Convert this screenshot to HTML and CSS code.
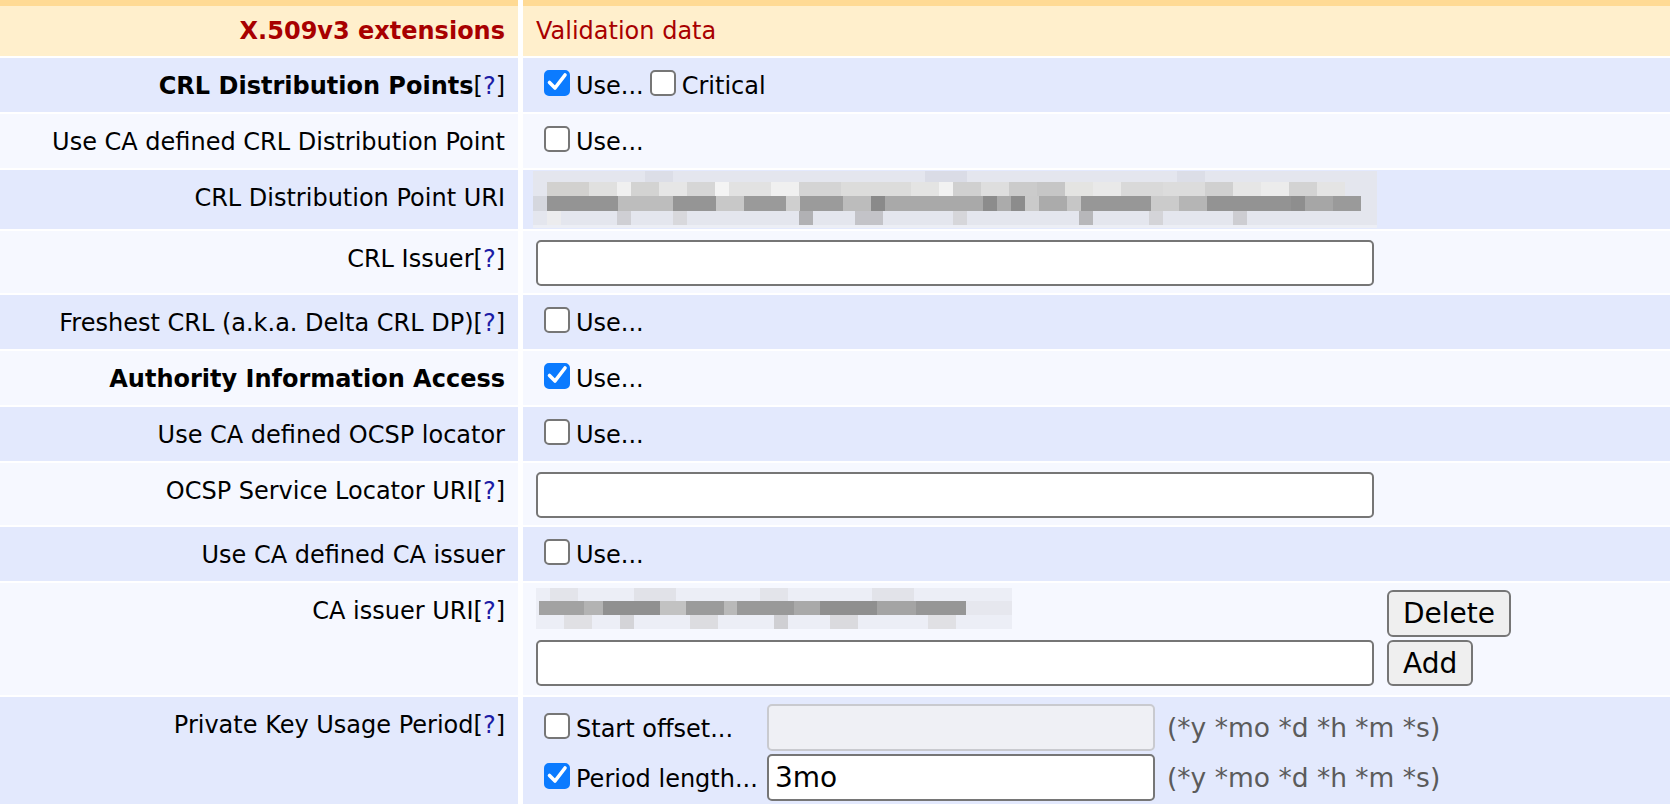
FILE: index.html
```html
<!DOCTYPE html>
<html lang="en">
<head>
<meta charset="utf-8">
<title>Certificate profile – X.509v3 extensions</title>
<link rel="stylesheet" href="styles.css">
</head>
<body>
<div class="sheet">

  <div class="row band"><div></div><div></div></div>

  <div class="row head">
    <div class="key"><strong>X.509v3 extensions</strong></div>
    <div class="val">Validation data</div>
  </div>

  <div class="row tone-a">
    <div class="key"><strong>CRL Distribution Points</strong>[<a class="help" href="#">?</a>]</div>
    <div class="val">
      <span class="box on"><svg viewBox="0 0 26 26"><path d="M5.5 12.5 L11 18 L21 5"/></svg></span><span class="opt">Use...</span>
      <span class="box gap"></span><span class="opt">Critical</span>
    </div>
  </div>

  <div class="row tone-b">
    <div class="key">Use CA defined CRL Distribution Point</div>
    <div class="val"><span class="box"></span><span class="opt">Use...</span></div>
  </div>

  <div class="row tone-a">
    <div class="key">CRL Distribution Point URI</div>
    <div class="val pix-cell">
      <svg class="pix pix-wide" viewBox="0 0 844 57" preserveAspectRatio="none">
        <rect x="0" y="0" width="844" height="57" fill="#e4e6ee"/>
        <rect x="112" y="0" width="28" height="11" fill="#dcdee7"/>
        <rect x="392" y="0" width="42" height="11" fill="#dadce6"/>
        <rect x="644" y="0" width="28" height="11" fill="#dcdee7"/>
        <!-- second band -->
        <rect x="14" y="11" width="42" height="14" fill="#d2d1cf"/>
        <rect x="56" y="11" width="28" height="14" fill="#e0e0df"/>
        <rect x="84" y="11" width="14" height="14" fill="#f0f0f0"/>
        <rect x="98" y="11" width="28" height="14" fill="#d3d3d2"/>
        <rect x="126" y="11" width="28" height="14" fill="#e6e6e6"/>
        <rect x="154" y="11" width="28" height="14" fill="#d6d6d6"/>
        <rect x="182" y="11" width="14" height="14" fill="#f4f4f4"/>
        <rect x="196" y="11" width="42" height="14" fill="#e2e2e2"/>
        <rect x="238" y="11" width="28" height="14" fill="#f0f0f0"/>
        <rect x="266" y="11" width="42" height="14" fill="#d4d4d4"/>
        <rect x="308" y="11" width="70" height="14" fill="#dcdcdb"/>
        <rect x="378" y="11" width="28" height="14" fill="#e4e4e3"/>
        <rect x="406" y="11" width="14" height="14" fill="#f2f2f2"/>
        <rect x="420" y="11" width="28" height="14" fill="#d0d0d0"/>
        <rect x="448" y="11" width="28" height="14" fill="#dedede"/>
        <rect x="476" y="11" width="28" height="14" fill="#cbcbcb"/>
        <rect x="504" y="11" width="28" height="14" fill="#c6c6c6"/>
        <rect x="532" y="11" width="28" height="14" fill="#e4e4e2"/>
        <rect x="560" y="11" width="28" height="14" fill="#e9e9e9"/>
        <rect x="588" y="11" width="42" height="14" fill="#d9d9d9"/>
        <rect x="630" y="11" width="42" height="14" fill="#dcdcdc"/>
        <rect x="672" y="11" width="28" height="14" fill="#d0d0d0"/>
        <rect x="700" y="11" width="28" height="14" fill="#e6e6e6"/>
        <rect x="728" y="11" width="28" height="14" fill="#ececec"/>
        <rect x="756" y="11" width="28" height="14" fill="#d3d3d3"/>
        <rect x="784" y="11" width="28" height="14" fill="#e4e4e4"/>
        <!-- dark band -->
        <rect x="0" y="25" width="14" height="15" fill="#d5d7de"/>
        <rect x="14" y="25" width="71" height="15" fill="#949494"/>
        <rect x="85" y="25" width="55" height="15" fill="#bdbdbd"/>
        <rect x="140" y="25" width="43" height="15" fill="#959595"/>
        <rect x="183" y="25" width="28" height="15" fill="#c8c8c8"/>
        <rect x="211" y="25" width="42" height="15" fill="#9a9a9a"/>
        <rect x="253" y="25" width="14" height="15" fill="#cfcfcf"/>
        <rect x="267" y="25" width="43" height="15" fill="#9b9b9b"/>
        <rect x="310" y="25" width="28" height="15" fill="#bcbcbc"/>
        <rect x="338" y="25" width="14" height="15" fill="#8a8a8a"/>
        <rect x="352" y="25" width="98" height="15" fill="#a9a9a9"/>
        <rect x="450" y="25" width="14" height="15" fill="#8c8c8c"/>
        <rect x="464" y="25" width="14" height="15" fill="#ababab"/>
        <rect x="478" y="25" width="14" height="15" fill="#8c8c8c"/>
        <rect x="492" y="25" width="14" height="15" fill="#cacaca"/>
        <rect x="506" y="25" width="28" height="15" fill="#ababab"/>
        <rect x="534" y="25" width="14" height="15" fill="#c6c6c6"/>
        <rect x="548" y="25" width="70" height="15" fill="#979797"/>
        <rect x="618" y="25" width="28" height="15" fill="#cbcbcb"/>
        <rect x="646" y="25" width="28" height="15" fill="#b5b5b5"/>
        <rect x="674" y="25" width="84" height="15" fill="#939393"/>
        <rect x="758" y="25" width="14" height="15" fill="#8e8e8e"/>
        <rect x="772" y="25" width="28" height="15" fill="#a6a6a6"/>
        <rect x="800" y="25" width="28" height="15" fill="#9a9a9a"/>
        <!-- lower band -->
        <rect x="14" y="40" width="14" height="14" fill="#ececee"/>
        <rect x="84" y="40" width="14" height="14" fill="#cfcfd4"/>
        <rect x="140" y="40" width="14" height="14" fill="#d8d8dc"/>
        <rect x="266" y="40" width="14" height="14" fill="#b1b1b4"/>
        <rect x="322" y="40" width="28" height="14" fill="#c3c3c8"/>
        <rect x="420" y="40" width="14" height="14" fill="#d6d6da"/>
        <rect x="546" y="40" width="14" height="14" fill="#b7b7ba"/>
        <rect x="616" y="40" width="14" height="14" fill="#d4d4d8"/>
        <rect x="700" y="40" width="14" height="14" fill="#cdcdd2"/>
        <rect x="0" y="54" width="844" height="3" fill="#eceef5"/>
      </svg>
    </div>
  </div>

  <div class="row tone-b">
    <div class="key">CRL Issuer[<a class="help" href="#">?</a>]</div>
    <div class="val field-cell"><input class="field wide" type="text"></div>
  </div>

  <div class="row tone-a">
    <div class="key">Freshest CRL (a.k.a. Delta CRL DP)[<a class="help" href="#">?</a>]</div>
    <div class="val"><span class="box"></span><span class="opt">Use...</span></div>
  </div>

  <div class="row tone-b">
    <div class="key"><strong>Authority Information Access</strong></div>
    <div class="val">
      <span class="box on"><svg viewBox="0 0 26 26"><path d="M5.5 12.5 L11 18 L21 5"/></svg></span><span class="opt">Use...</span>
    </div>
  </div>

  <div class="row tone-a">
    <div class="key">Use CA defined OCSP locator</div>
    <div class="val"><span class="box"></span><span class="opt">Use...</span></div>
  </div>

  <div class="row tone-b">
    <div class="key">OCSP Service Locator URI[<a class="help" href="#">?</a>]</div>
    <div class="val field-cell"><input class="field wide" type="text"></div>
  </div>

  <div class="row tone-a">
    <div class="key">Use CA defined CA issuer</div>
    <div class="val"><span class="box"></span><span class="opt">Use...</span></div>
  </div>

  <div class="row tone-b">
    <div class="key">CA issuer URI[<a class="help" href="#">?</a>]</div>
    <div class="val list-cell">
      <div class="uri-list">
        <svg class="pix pix-short" viewBox="0 0 476 41" preserveAspectRatio="none">
          <rect x="0" y="0" width="476" height="41" fill="#eceef6"/>
          <rect x="14" y="0" width="28" height="13" fill="#e3e4ea"/>
          <rect x="98" y="0" width="42" height="13" fill="#e1e2e8"/>
          <rect x="224" y="0" width="28" height="13" fill="#e3e4ea"/>
          <rect x="336" y="0" width="42" height="13" fill="#e2e3e9"/>
          <!-- dark band -->
          <rect x="3" y="13" width="45" height="14" fill="#a2a2a2"/>
          <rect x="48" y="13" width="19" height="14" fill="#b3b3b3"/>
          <rect x="67" y="13" width="57" height="14" fill="#909090"/>
          <rect x="124" y="13" width="26" height="14" fill="#c2c2c2"/>
          <rect x="150" y="13" width="38" height="14" fill="#9b9b9b"/>
          <rect x="188" y="13" width="13" height="14" fill="#b9b9b9"/>
          <rect x="201" y="13" width="57" height="14" fill="#999999"/>
          <rect x="258" y="13" width="26" height="14" fill="#a9a9a9"/>
          <rect x="284" y="13" width="57" height="14" fill="#8f8f8f"/>
          <rect x="341" y="13" width="39" height="14" fill="#a4a4a4"/>
          <rect x="380" y="13" width="50" height="14" fill="#969696"/>
          <rect x="430" y="13" width="46" height="14" fill="#e6e7ee"/>
          <!-- lower band -->
          <rect x="28" y="27" width="28" height="14" fill="#e0e0e4"/>
          <rect x="84" y="27" width="14" height="14" fill="#d4d4d8"/>
          <rect x="154" y="27" width="28" height="14" fill="#dcdce0"/>
          <rect x="238" y="27" width="14" height="14" fill="#cfcfd3"/>
          <rect x="294" y="27" width="28" height="14" fill="#dadade"/>
          <rect x="392" y="27" width="28" height="14" fill="#e0e0e4"/>
        </svg>
        <button class="btn tall" type="button">Delete</button>
        <input class="field wide" type="text">
        <button class="btn" type="button">Add</button>
      </div>
    </div>
  </div>

  <div class="row tone-a">
    <div class="key">Private Key Usage Period[<a class="help" href="#">?</a>]</div>
    <div class="val list-cell">
      <div class="period">
        <div class="period-opt"><span class="box"></span><span class="opt">Start offset...</span></div>
        <input class="field short" type="text" disabled>
        <span class="hint">(*y *mo *d *h *m *s)</span>

        <div class="period-opt"><span class="box on"><svg viewBox="0 0 26 26"><path d="M5.5 12.5 L11 18 L21 5"/></svg></span><span class="opt">Period length...</span></div>
        <input class="field short" type="text" value="3mo">
        <span class="hint">(*y *mo *d *h *m *s)</span>
      </div>
    </div>
  </div>

</div>
</body>
</html>
```

FILE: styles.css
```css
html, body {
  margin: 0;
  padding: 0;
  background: #ffffff;
}

body {
  font-family: "DejaVu Sans", Verdana, sans-serif;
  font-size: 24px;
  line-height: 28px;
  color: #000000;
}

/* two-column form table */
.sheet {
  display: flex;
  flex-direction: column;
  gap: 2px;
}

.row {
  display: grid;
  grid-template-columns: 518px 1fr;
  column-gap: 5px;
}

.key {
  text-align: right;
  padding: 14px 13px 12px 8px;
  white-space: nowrap;
}

.val {
  display: flex;
  align-items: center;
  padding: 0 13px;
  white-space: nowrap;
}

.opt {
  padding-top: 2px;
}

/* row colours */
.band {
  margin-bottom: -2px;
}

.band > div {
  height: 6px;
  background: #ffda94;
}

.head > div {
  background: #ffefcc;
  color: #a80000;
  padding-top: 11px;
  padding-bottom: 11px;
}

.tone-a > div {
  background: #e3e9fd;
}

.tone-b > div {
  background: #f6f8ff;
}

.help {
  color: #1c1ca6;
  text-decoration: none;
}

/* checkboxes */
.box {
  flex: none;
  box-sizing: border-box;
  width: 26px;
  height: 26px;
  margin: 0 6px 4px 8px;
  border: 2px solid #767676;
  border-radius: 5px;
  background: #ffffff;
  display: inline-flex;
}

.box.gap {
  margin-left: 6px;
}

.box.on {
  background: #0b7bff;
  border-color: #0b7bff;
}

.box svg {
  width: 26px;
  height: 26px;
  margin: -2px;
}

.box svg path {
  fill: none;
  stroke: #ffffff;
  stroke-width: 3.6;
  stroke-linecap: round;
  stroke-linejoin: round;
}

/* pixelated address strips */
.pix-cell {
  padding: 1px 13px 1px;
}

.pix {
  display: block;
}

.pix-wide {
  width: 844px;
  height: 57px;
  margin-left: -3px;
}

.pix-short {
  width: 476px;
  height: 41px;
  margin-top: -2px;
}

/* text inputs */
.field-cell {
  padding: 9px 13px 7px;
}

.field {
  box-sizing: border-box;
  height: 46px;
  margin: 0;
  padding: 0 6px;
  border: 2px solid #767676;
  border-radius: 5px;
  background: #ffffff;
  font-family: "DejaVu Sans", Verdana, sans-serif;
  font-size: 28px;
  color: #000000;
}

.field.wide {
  width: 838px;
}

.field.short {
  width: 388px;
  height: 47px;
}

.field:disabled {
  background: #eff0f5;
  border-color: #c9cacf;
}

/* buttons */
.btn {
  box-sizing: border-box;
  height: 46px;
  margin: 0;
  padding: 0 14px;
  border: 2px solid #767676;
  border-radius: 6px;
  background: #efefef;
  font-family: "DejaVu Sans", Verdana, sans-serif;
  font-size: 28px;
  color: #000000;
}

.btn.tall {
  height: 47px;
}

/* multi-line value cells */
.list-cell {
  padding: 7px 13px 9px;
  align-items: flex-start;
}

.uri-list {
  display: grid;
  grid-template-columns: 838px auto;
  column-gap: 13px;
  row-gap: 3px;
  justify-items: start;
}

.period {
  display: grid;
  grid-template-columns: 219px 388px auto;
  column-gap: 12px;
  row-gap: 3px;
  align-items: center;
}

.period-opt {
  display: flex;
  align-items: center;
}

.hint {
  color: #5b5b5b;
  font-size: 26.5px;
}
```
